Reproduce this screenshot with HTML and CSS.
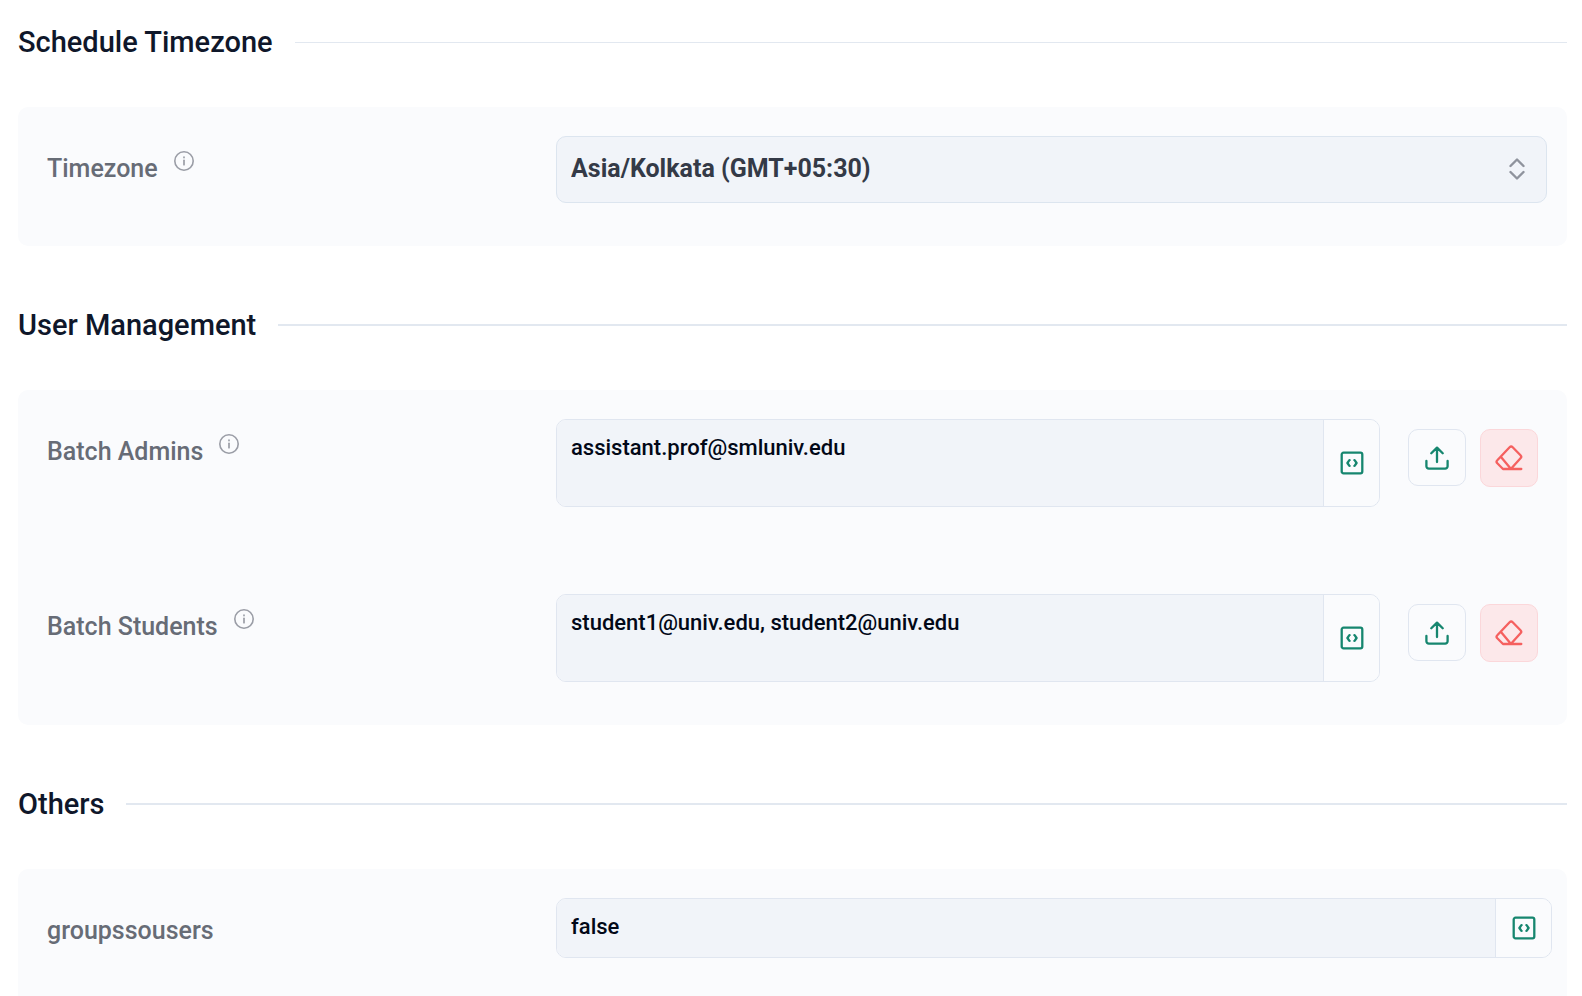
FILE: index.html
```html
<!DOCTYPE html>
<html lang="en">
<head>
  <meta charset="UTF-8">
  <title>Batch Settings</title>
  <link rel="stylesheet" href="styles.css">
</head>
<body>
  <!-- shared icons -->
  <svg class="icon-defs" width="0" height="0" aria-hidden="true">
    <symbol id="icon-info" viewBox="0 0 20 20">
      <circle cx="10" cy="10" r="9.2" stroke-width="1.6"/>
      <path d="M10 9.3v4.4" stroke-width="1.7"/>
      <path d="M10 6v.6" stroke-width="1.7"/>
    </symbol>
    <symbol id="icon-code" viewBox="0 0 24 24">
      <rect x="1.7" y="1.7" width="20.6" height="20.6" rx="1.8" stroke-width="2.3"/>
      <path d="M9.600 9.200H9.400L7.400 12l2 2.900h.2M14.400 9.200h.2l2 2.800-2 2.900h-.2" stroke-width="2.300"/>
    </symbol>
    <symbol id="icon-upload" viewBox="0 0 24 24">
      <path d="M12 16V1.800M6.300 7.300L12 1.600l5.700 5.700M1.400 15v5.200a2.400 2.400 0 0 0 2.400 2.400h16.400a2.400 2.400 0 0 0 2.400-2.400V15" stroke-width="2.300"/>
    </symbol>
    <symbol id="icon-eraser" viewBox="0 0 28 26">
      <path d="M8 24L2.300 18.300a2.200 2.200 0 0 1 0-3.100L14.600 2.200a2.200 2.200 0 0 1 3.100 0l7.800 8a2.200 2.200 0 0 1 0 3.100L15.800 24M6 12l10 12M8 24H26.300" stroke-width="2.300"/>
    </symbol>
  </svg>

  <main class="settings">
    <section class="section">
      <h2 class="section-title section-title-thin">Schedule Timezone</h2>
      <div class="panel">
        <div class="row">
          <div class="row-label">
            <label for="timezone">Timezone</label>
            <svg class="info"><use href="#icon-info"/></svg>
          </div>
          <div class="select-box">
            <select id="timezone">
              <option>Asia/Kolkata (GMT+05:30)</option>
            </select>
            <svg class="select-arrows" viewBox="0 0 16 22">
              <path d="M1.500 8L8 1.500 14.500 8M1.500 14L8 20.500l6.500-6.500"/>
            </svg>
          </div>
        </div>
      </div>
    </section>

    <section class="section">
      <h2 class="section-title">User Management</h2>
      <div class="panel">
        <div class="row">
          <div class="row-label">
            <label for="admins">Batch Admins</label>
            <svg class="info"><use href="#icon-info"/></svg>
          </div>
          <div class="row-field">
            <div class="value-box">
              <textarea id="admins" rows="2">assistant.prof@smluniv.edu</textarea>
              <button type="button" class="code-btn" aria-label="Expression"><svg><use href="#icon-code"/></svg></button>
            </div>
            <div class="actions">
              <button type="button" class="btn upload-btn" aria-label="Upload"><svg><use href="#icon-upload"/></svg></button>
              <button type="button" class="btn clear-btn" aria-label="Clear"><svg><use href="#icon-eraser"/></svg></button>
            </div>
          </div>
        </div>
        <div class="row">
          <div class="row-label">
            <label for="students">Batch Students</label>
            <svg class="info"><use href="#icon-info"/></svg>
          </div>
          <div class="row-field">
            <div class="value-box">
              <textarea id="students" rows="2">student1@univ.edu, student2@univ.edu</textarea>
              <button type="button" class="code-btn" aria-label="Expression"><svg><use href="#icon-code"/></svg></button>
            </div>
            <div class="actions">
              <button type="button" class="btn upload-btn" aria-label="Upload"><svg><use href="#icon-upload"/></svg></button>
              <button type="button" class="btn clear-btn" aria-label="Clear"><svg><use href="#icon-eraser"/></svg></button>
            </div>
          </div>
        </div>
      </div>
    </section>

    <section class="section">
      <h2 class="section-title">Others</h2>
      <div class="panel">
        <div class="row">
          <div class="row-label">
            <label for="groupssousers">groupssousers</label>
          </div>
          <div class="row-field row-field-wide">
            <div class="value-box">
              <textarea id="groupssousers" class="single" rows="1">false</textarea>
              <button type="button" class="code-btn" aria-label="Expression"><svg><use href="#icon-code"/></svg></button>
            </div>
          </div>
        </div>
      </div>
    </section>
  </main>
</body>
</html>
```

FILE: styles.css
```css
* {
  box-sizing: border-box;
}

body {
  margin: 0;
  background: #fff;
  font-family: Roboto, sans-serif;
  font-weight: 500;
}

button,
select,
textarea {
  font: inherit;
  margin: 0;
}

svg {
  display: block;
  fill: none;
  stroke: currentColor;
  stroke-linecap: round;
  stroke-linejoin: round;
}

.icon-defs {
  position: absolute;
}

.settings {
  padding: 21px 15px 0 18px;
}

.section {
  margin-bottom: 58px;
}

.section:last-child {
  margin-bottom: 0;
}

.section-title {
  display: flex;
  align-items: center;
  gap: 22px;
  margin: 0 0 44px;
  color: #0f172a;
  font-size: 29px;
  font-weight: 500;
  line-height: 42px;
}

/* rule that fills the rest of the heading line */
.section-title::after {
  content: "";
  flex: 1;
  height: 2px;
  background: #e2e8f0;
}

.section-title-thin::after {
  height: 1px;
}

.panel {
  display: flex;
  flex-direction: column;
  gap: 15px;
  background: #fafbfd;
  border-radius: 10px;
}

.row {
  display: grid;
  grid-template-columns: 1fr 2fr;
  column-gap: 18px;
  padding: 29px 29px 43px;
}

.row-label {
  display: flex;
  align-items: flex-start;
  gap: 16px;
  color: #676c76;
  font-size: 25px;
  line-height: 66px;
}

.info {
  width: 20px;
  height: 20px;
  margin-top: 15px;
  color: #9a9da6;
}

/* timezone drop-down */
.select-box {
  position: relative;
  height: 67px;
  margin-right: -9px;
}

.select-box select {
  appearance: none;
  width: 100%;
  height: 100%;
  padding: 0 56px 3px 14px;
  border: 1px solid #dce5ef;
  border-radius: 10px;
  background: #f1f4f9;
  color: #343a47;
  font-size: 25px;
  font-weight: 700;
}

.select-arrows {
  position: absolute;
  top: 22px;
  right: 22px;
  width: 16px;
  height: 22px;
  color: #8f939d;
  stroke-width: 2.4;
  pointer-events: none;
}

/* text value with its code button */
.row-field {
  display: flex;
  align-items: flex-start;
  gap: 28px;
}

.row-field-wide {
  margin-right: -14px;
}

.value-box {
  display: flex;
  flex: 1;
  border: 1px solid #e0e6f0;
  border-radius: 10px;
  overflow: hidden;
}

.value-box textarea {
  display: block;
  flex: 1;
  min-width: 0;
  height: 86px;
  padding: 14px;
  border: 0;
  background: #f1f4f9;
  color: #020817;
  font-size: 22px;
  line-height: 28px;
  resize: none;
  overflow: hidden;
}

.value-box textarea.single {
  height: 58px;
}

.code-btn {
  display: flex;
  align-items: center;
  justify-content: center;
  width: 56px;
  padding: 0;
  border: 0;
  border-left: 1px solid #e0e6f0;
  background: #fafbfd;
  color: #16866f;
}

.code-btn svg,
.upload-btn svg {
  width: 24px;
  height: 24px;
}

.actions {
  display: flex;
  gap: 14px;
  padding-top: 10px;
}

.btn {
  display: flex;
  align-items: center;
  justify-content: center;
  width: 58px;
  height: 58px;
  padding: 0;
  border: 1px solid #e0e6f0;
  border-radius: 10px;
  background: #fafbfd;
}

.upload-btn {
  height: 57px;
  color: #16866f;
}

.clear-btn {
  border-color: #fbd7da;
  background: #fce8ea;
  color: #f5605f;
}

.clear-btn svg {
  width: 28px;
  height: 26px;
}
```
